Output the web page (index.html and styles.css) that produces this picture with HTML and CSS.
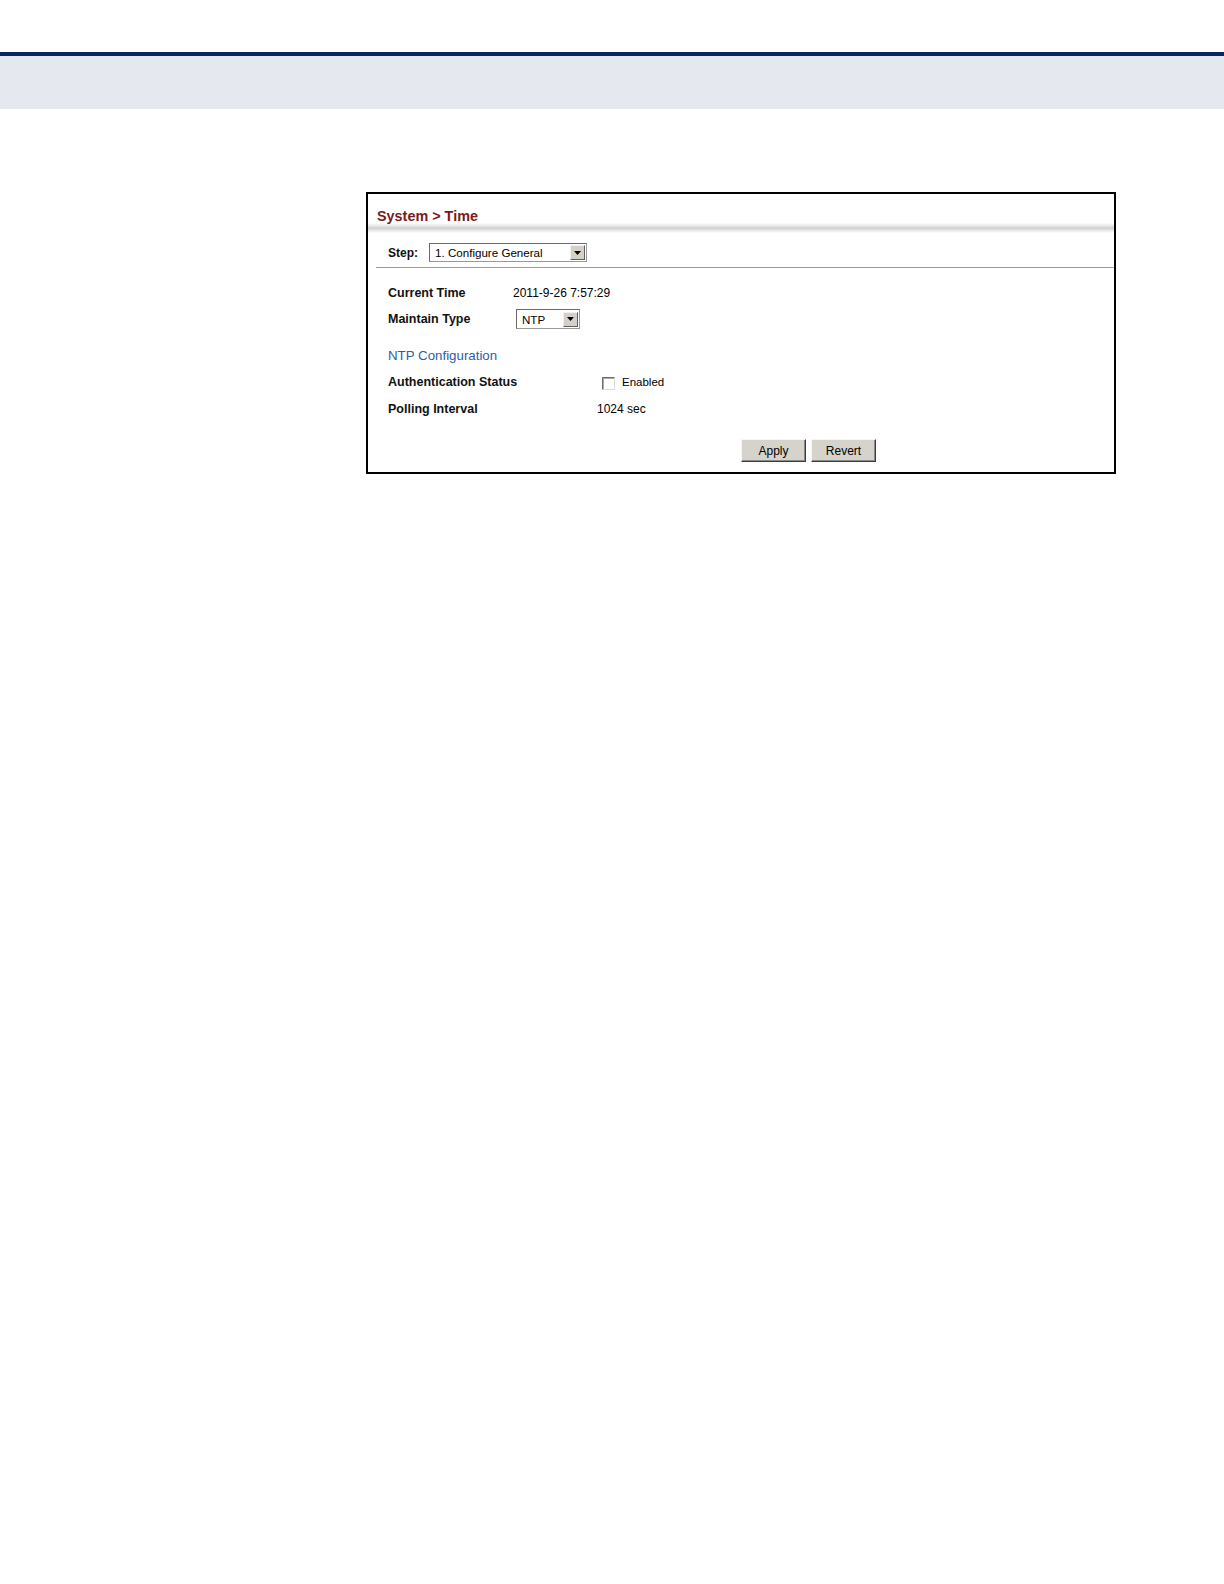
FILE: index.html
```html
<!DOCTYPE html>
<html lang="en">
<head>
<meta charset="utf-8">
<title>System &gt; Time</title>
<link rel="stylesheet" href="styles.css">
</head>
<body>
<div class="topbar"></div>
<div class="panel">
  <div class="title">System &gt; Time</div>
  <div class="title-rule"></div>
  <div class="step-row">
    <span class="step-label">Step:</span>
    <div class="select select-step">
      <span class="select-text">1. Configure General</span>
      <span class="select-arrow"><svg width="7" height="4" viewBox="0 0 7 4"><polygon points="0,0 7,0 3.5,4" fill="#000"/></svg></span>
    </div>
  </div>
  <div class="content">
    <div class="row">
      <span class="label label-general">Current Time</span>
      <span class="value">2011-9-26 7:57:29</span>
    </div>
    <div class="row">
      <span class="label label-general">Maintain Type</span>
      <div class="select select-type">
        <span class="select-text">NTP</span>
        <span class="select-arrow"><svg width="7" height="4" viewBox="0 0 7 4"><polygon points="0,0 7,0 3.5,4" fill="#000"/></svg></span>
      </div>
    </div>
    <div class="section-title">NTP Configuration</div>
    <div class="row">
      <span class="label label-ntp">Authentication Status</span>
      <span class="check-wrap"><span class="checkbox"></span><span class="check-text">Enabled</span></span>
    </div>
    <div class="row row-last">
      <span class="label label-ntp">Polling Interval</span>
      <span class="value">1024 sec</span>
    </div>
    <div class="buttons">
      <button class="btn" type="button">Apply</button>
      <button class="btn" type="button">Revert</button>
    </div>
  </div>
</div>
</body>
</html>
```

FILE: styles.css
```css
html, body {
  margin: 0;
  padding: 0;
  background: #ffffff;
}

body {
  font-family: "Liberation Sans", Arial, sans-serif;
  color: #000;
}

.topbar {
  margin-top: 52px;
  height: 53px;
  border-top: 4px solid #0b2463;
  background: #e5e8ef;
}

.panel {
  box-sizing: border-box;
  width: 750px;
  height: 282px;
  margin: 83px 0 0 366px;
  border: 2px solid #000;
  background: #fff;
}

.title {
  padding: 15px 0 0 9px;
  height: 14px;
  line-height: 14px;
  font-size: 14.4px;
  font-weight: bold;
  color: #781b1b;
  white-space: nowrap;
}

.title-rule {
  height: 10px;
  background: linear-gradient(to bottom, #ffffff 0%, #e2e2e2 35%, #d0d0d0 50%, #e8e8e8 75%, #ffffff 100%);
}

.step-row {
  display: flex;
  align-items: center;
  margin-left: 8px;
  padding: 10px 0 5px 12px;
  height: 19px;
  border-bottom: 1px solid #9a9a9a;
}

.step-label {
  font-size: 12px;
  font-weight: bold;
  color: #111;
  margin-right: 11px;
}

.select {
  box-sizing: border-box;
  display: flex;
  align-items: center;
  justify-content: space-between;
  border: 1px solid #6a6a6a;
  border-right-color: #9a9a9a;
  border-bottom-color: #9a9a9a;
  background: #fff;
}

.select-step {
  width: 158px;
  height: 19px;
}

.select-type {
  width: 64px;
  height: 20px;
  margin-left: 3px;
}

.select-text {
  padding-left: 5px;
  font-size: 11.6px;
  color: #000;
  white-space: nowrap;
}

.select-arrow {
  box-sizing: border-box;
  display: flex;
  align-items: center;
  justify-content: center;
  width: 15px;
  height: 15px;
  margin-right: 1px;
  background: #d4d0c8;
  border-top: 1px solid #f0f0f0;
  border-left: 1px solid #f0f0f0;
  border-right: 1px solid #606060;
  border-bottom: 1px solid #606060;
}

.select-arrow svg {
  display: block;
}

.content {
  padding: 12px 0 0 20px;
}

.row {
  display: flex;
  align-items: center;
  height: 26px;
}

.row-last {
  height: 27px;
}

.label {
  font-size: 12.5px;
  font-weight: bold;
  color: #111;
  white-space: nowrap;
}

.label-general {
  width: 125px;
}

.label-ntp {
  width: 209px;
}

.value {
  font-size: 12px;
  color: #000;
  white-space: nowrap;
}

.section-title {
  margin-top: 11px;
  height: 26px;
  line-height: 26px;
  font-size: 13.3px;
  color: #2f5ca6;
  white-space: nowrap;
}

.check-wrap {
  display: flex;
  align-items: center;
  margin-left: 5px;
}

.checkbox {
  box-sizing: border-box;
  width: 13px;
  height: 13px;
  margin-top: 2px;
  background: #fff;
  border-top: 1px solid #6e6e6e;
  border-left: 1px solid #6e6e6e;
  border-right: 1px solid #dcdcdc;
  border-bottom: 1px solid #dcdcdc;
  box-shadow: inset 1px 1px 0 #a8a8a8;
}

.check-text {
  margin-left: 7px;
  font-size: 11.5px;
  color: #000;
}

.buttons {
  display: flex;
  gap: 5px;
  margin-top: 17px;
  padding-left: 353px;
}

.btn {
  box-sizing: border-box;
  width: 65px;
  height: 23px;
  padding: 0;
  font-family: "Liberation Sans", Arial, sans-serif;
  font-size: 12px;
  color: #000;
  background: #d6d3cc;
  border-top: 1px solid #f6f6f6;
  border-left: 1px solid #f6f6f6;
  border-right: 1px solid #3c3c3c;
  border-bottom: 1px solid #3c3c3c;
  box-shadow: inset -1px -1px 0 #8a8a8a;
  border-radius: 0;
}
```
